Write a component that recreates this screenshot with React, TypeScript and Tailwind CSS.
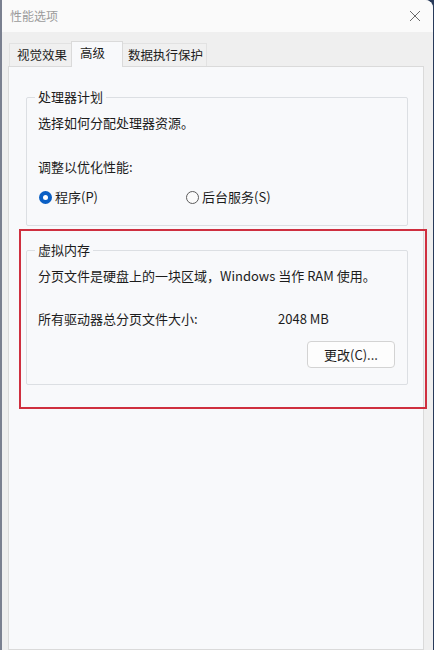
import React from 'react'

const font = { fontFamily: '"Noto Sans CJK SC", "Noto Sans", sans-serif' }

function Radio({ checked, label }: { checked?: boolean; label: string }) {
  return (
    <div className="flex items-center gap-[3px]">
      {checked ? (
        <span className="w-[13px] h-[13px] rounded-full bg-[#0a5fc4] flex items-center justify-center">
          <span className="w-[5px] h-[5px] rounded-full bg-white" />
        </span>
      ) : (
        <span className="w-[13px] h-[13px] rounded-full border border-[#5c5c5c] bg-[#fbfbfb]" />
      )}
      <span>{label}</span>
    </div>
  )
}

function Group({ title, children, className }: { title: string; children: React.ReactNode; className?: string }) {
  return (
    <fieldset className={`border border-[#dcdfe3] rounded-[2px] px-[11px] ${className ?? ''}`}>
      <legend className="px-[3px] ml-[-3px] leading-[16px] text-[#1c1c1c]">{title}</legend>
      {children}
    </fieldset>
  )
}

export default function App() {
  return (
    <div className="w-[434px] h-[650px] bg-[#283a5a] overflow-hidden" style={font}>
      <div className="w-[433px] h-[650px] bg-[#efefef] border-l-2 border-[#7a8090] rounded-tr-[8px] flex flex-col text-[13px] text-[#1c1c1c]">
        {/* Title bar */}
        <div className="h-[32px] bg-[#fafafa] rounded-tr-[8px] flex items-center justify-between pl-[8px] pr-[10px] shrink-0">
          <span className="text-[12px] text-[#9a9a9a]">性能选项</span>
          <svg width="12" height="12" viewBox="0 0 12 12" className="mr-[2px]">
            <path d="M1 1L11 11M11 1L1 11" stroke="#6a6a6a" strokeWidth="1" />
          </svg>
        </div>

        <div className="flex-1 flex flex-col pl-[6px] pr-[9px] pt-[9px]">
          {/* Tabs */}
          <div className="flex items-end h-[25px] relative z-10 pl-[1px] text-[12.5px]">
            <div className="h-[23px] w-[62px] pl-[7px] flex items-center border-t border-l border-[#e2e2e2] bg-[#f0f0f0]">视觉效果</div>
            <div className="h-[26px] mb-[-1px] w-[52px] pl-[8px] pb-[3px] flex items-center border border-b-0 border-[#dadada] bg-[#f8f9fb]">高级</div>
            <div className="h-[23px] w-[84px] pl-[5px] flex items-center border-t border-r border-[#e2e2e2] bg-[#f0f0f0]">数据执行保护</div>
          </div>

          {/* Panel */}
          <div className="flex-1 border border-[#dadada] bg-[#f8f9fb] pt-[22px]">
            <Group title="处理器计划" className="ml-[17px] mr-[15px] pb-[19px]">
              <div className="pt-[9px] leading-[18px]">选择如何分配处理器资源。</div>
              <div className="pt-[26px] leading-[18px]">调整以优化性能:</div>
              <div className="flex pt-[12px] leading-[18px] pl-[1px]">
                <div className="w-[147px]">
                  <Radio checked label="程序(P)" />
                </div>
                <Radio label="后台服务(S)" />
              </div>
            </Group>

            {/* Highlight */}
            <div className="mt-[3px] ml-[10px] mr-[-4px] border-2 border-[#cf2f3f] pt-[11px] pb-[22px] pl-[5px] pr-[17px]">
              <Group title="虚拟内存" className="pb-[16px]">
                <div className="pt-[9px] leading-[18px]">分页文件是硬盘上的一块区域，Windows 当作 RAM 使用。</div>
                <div className="flex pt-[25px] leading-[18px]">
                  <span className="w-[240px]">所有驱动器总分页文件大小:</span>
                  <span>2048 MB</span>
                </div>
                <div className="flex justify-end pt-[13px] pr-[1px]">
                  <button className="w-[88px] h-[27px] rounded-[4px] border border-[#d3d3d3] bg-[#fdfdfd] text-[13px] text-[#1c1c1c]">
                    更改(C)...
                  </button>
                </div>
              </Group>
            </div>
          </div>
        </div>
      </div>
    </div>
  )
}
